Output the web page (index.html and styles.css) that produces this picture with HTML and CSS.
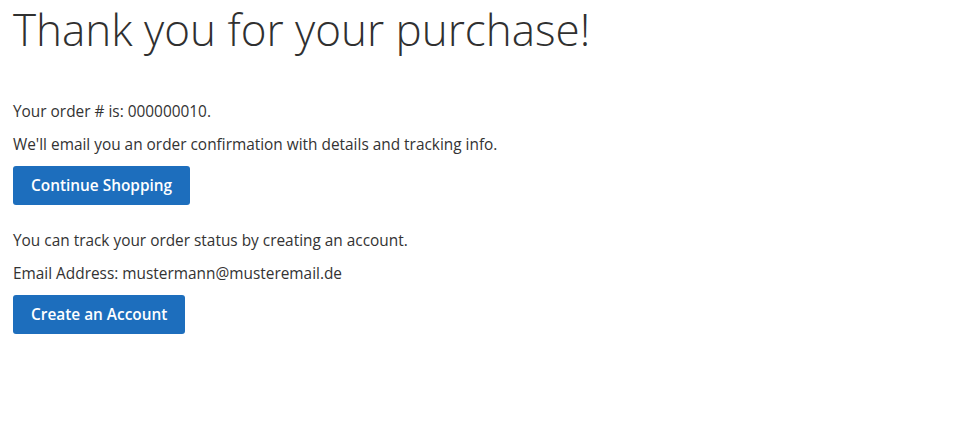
FILE: index.html
```html
<!DOCTYPE html>
<html lang="en">
<head>
<meta charset="utf-8">
<title>Thank you for your purchase!</title>
<link rel="stylesheet" href="styles.css">
</head>
<body>
<main class="page">
  <h1 class="page-title">Thank you for your purchase!</h1>
  <div class="checkout-success">
    <p class="line">Your order # is: <span>000000010</span>.</p>
    <p class="line">We'll email you an order confirmation with details and tracking info.</p>
    <div class="actions">
      <a class="btn-primary" href="#">Continue Shopping</a>
    </div>
  </div>
  <div class="registration">
    <p class="line">You can track your order status by creating an account.</p>
    <p class="line">Email Address: <span>mustermann@musteremail.de</span></p>
    <div class="actions">
      <a class="btn-primary" href="#">Create an Account</a>
    </div>
  </div>
</main>
</body>
</html>
```
FILE: styles.css
```css
html, body {
  margin: 0;
  padding: 0;
  background: #ffffff;
}
body {
  font-family: "Open Sans", "Liberation Sans", sans-serif;
  color: #333333;
  font-size: 15.4px;
  line-height: 20px;
}
.page {
  padding: 4px 13px 0;
}
.page-title {
  margin: 0 0 48px;
  font-size: 44px;
  line-height: 50px;
  font-weight: 300;
  color: #303030;
}
.line {
  margin: 0 0 13px;
}
.checkout-success .line:nth-of-type(2) {
  margin-bottom: 11px;
}
.registration {
  margin-top: 26px;
}
.registration .line {
  margin-bottom: 13px;
}
.registration .line:nth-of-type(2) {
  margin-bottom: 11px;
}
.actions {
  display: flex;
}
.btn-primary {
  display: inline-flex;
  align-items: center;
  height: 39px;
  padding: 0 18px;
  background: #1d6ebd;
  color: #ffffff;
  border-radius: 3px;
  font-size: 15.4px;
  font-weight: 600;
  text-decoration: none;
  box-sizing: border-box;
}
```
